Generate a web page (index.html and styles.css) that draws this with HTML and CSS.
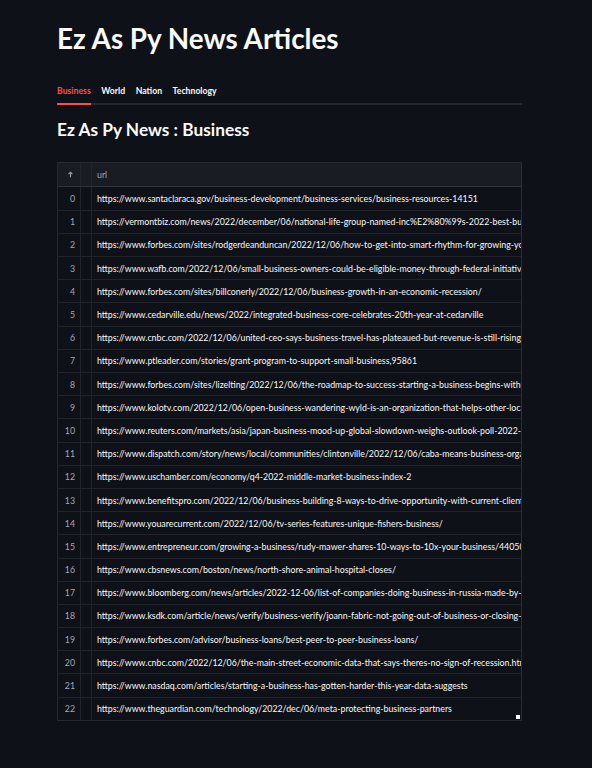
FILE: index.html
```html
<!DOCTYPE html>
<html>
<head>
<meta charset="utf-8">
<link rel="stylesheet" href="styles.css">
</head>
<body>
<main class="main">
  <h1 class="title">Ez As Py News Articles</h1>
  <div class="tabs">
    <span class="tab active">Business</span>
    <span class="tab">World</span>
    <span class="tab">Nation</span>
    <span class="tab">Technology</span>
  </div>
  <h2 class="subtitle">Ez As Py News : Business</h2>
  <div class="grid">
    <div class="row head">
      <div class="c-idx"><svg width="7" height="7" viewBox="0 0 8 8"><path d="M4 7V1.5M1.8 3.6L4 1.4 6.2 3.6" stroke="#9a9ca3" stroke-width="1.3" fill="none"/></svg></div>
      <div class="c-gap"></div>
      <div class="c-url">url</div>
    </div>
    <div class="row"><div class="c-idx">0</div><div class="c-gap"></div><div class="c-url">https://www.santaclaraca.gov/business-development/business-services/business-resources-14151</div></div>
    <div class="row"><div class="c-idx">1</div><div class="c-gap"></div><div class="c-url">https://vermontbiz.com/news/2022/december/06/national-life-group-named-inc%E2%80%99s-2022-best-business-to-work-for</div></div>
    <div class="row"><div class="c-idx">2</div><div class="c-gap"></div><div class="c-url">https://www.forbes.com/sites/rodgerdeanduncan/2022/12/06/how-to-get-into-smart-rhythm-for-growing-your-business/</div></div>
    <div class="row"><div class="c-idx">3</div><div class="c-gap"></div><div class="c-url">https://www.wafb.com/2022/12/06/small-business-owners-could-be-eligible-money-through-federal-initiative/</div></div>
    <div class="row"><div class="c-idx">4</div><div class="c-gap"></div><div class="c-url">https://www.forbes.com/sites/billconerly/2022/12/06/business-growth-in-an-economic-recession/</div></div>
    <div class="row"><div class="c-idx">5</div><div class="c-gap"></div><div class="c-url">https://www.cedarville.edu/news/2022/integrated-business-core-celebrates-20th-year-at-cedarville</div></div>
    <div class="row"><div class="c-idx">6</div><div class="c-gap"></div><div class="c-url">https://www.cnbc.com/2022/12/06/united-ceo-says-business-travel-has-plateaued-but-revenue-is-still-rising.html</div></div>
    <div class="row"><div class="c-idx">7</div><div class="c-gap"></div><div class="c-url">https://www.ptleader.com/stories/grant-program-to-support-small-business,95861</div></div>
    <div class="row"><div class="c-idx">8</div><div class="c-gap"></div><div class="c-url">https://www.forbes.com/sites/lizelting/2022/12/06/the-roadmap-to-success-starting-a-business-begins-with-a-plan/</div></div>
    <div class="row"><div class="c-idx">9</div><div class="c-gap"></div><div class="c-url">https://www.kolotv.com/2022/12/06/open-business-wandering-wyld-is-an-organization-that-helps-other-local-businesses/</div></div>
    <div class="row"><div class="c-idx">10</div><div class="c-gap"></div><div class="c-url">https://www.reuters.com/markets/asia/japan-business-mood-up-global-slowdown-weighs-outlook-poll-2022-12-06/</div></div>
    <div class="row"><div class="c-idx">11</div><div class="c-gap"></div><div class="c-url">https://www.dispatch.com/story/news/local/communities/clintonville/2022/12/06/caba-means-business-organization/</div></div>
    <div class="row"><div class="c-idx">12</div><div class="c-gap"></div><div class="c-url">https://www.uschamber.com/economy/q4-2022-middle-market-business-index-2</div></div>
    <div class="row"><div class="c-idx">13</div><div class="c-gap"></div><div class="c-url">https://www.benefitspro.com/2022/12/06/business-building-8-ways-to-drive-opportunity-with-current-clients/</div></div>
    <div class="row"><div class="c-idx">14</div><div class="c-gap"></div><div class="c-url">https://www.youarecurrent.com/2022/12/06/tv-series-features-unique-fishers-business/</div></div>
    <div class="row"><div class="c-idx">15</div><div class="c-gap"></div><div class="c-url">https://www.entrepreneur.com/growing-a-business/rudy-mawer-shares-10-ways-to-10x-your-business/440503</div></div>
    <div class="row"><div class="c-idx">16</div><div class="c-gap"></div><div class="c-url">https://www.cbsnews.com/boston/news/north-shore-animal-hospital-closes/</div></div>
    <div class="row"><div class="c-idx">17</div><div class="c-gap"></div><div class="c-url">https://www.bloomberg.com/news/articles/2022-12-06/list-of-companies-doing-business-in-russia-made-by-yale</div></div>
    <div class="row"><div class="c-idx">18</div><div class="c-gap"></div><div class="c-url">https://www.ksdk.com/article/news/verify/business-verify/joann-fabric-not-going-out-of-business-or-closing-stores</div></div>
    <div class="row"><div class="c-idx">19</div><div class="c-gap"></div><div class="c-url">https://www.forbes.com/advisor/business-loans/best-peer-to-peer-business-loans/</div></div>
    <div class="row"><div class="c-idx">20</div><div class="c-gap"></div><div class="c-url">https://www.cnbc.com/2022/12/06/the-main-street-economic-data-that-says-theres-no-sign-of-recession.html</div></div>
    <div class="row"><div class="c-idx">21</div><div class="c-gap"></div><div class="c-url">https://www.nasdaq.com/articles/starting-a-business-has-gotten-harder-this-year-data-suggests</div></div>
    <div class="row"><div class="c-idx">22</div><div class="c-gap"></div><div class="c-url">https://www.theguardian.com/technology/2022/dec/06/meta-protecting-business-partners</div></div>
    <span class="resize"></span>
  </div>
</main>
</body>
</html>
```
FILE: styles.css
```css
html, body {
  margin: 0;
  padding: 0;
  background: #0e1117;
  color: #fafafa;
  font-family: Lato, "Noto Sans", sans-serif;
}
.main {
  width: 465px;
  padding: 21px 0 0 57px;
}
.title {
  margin: 0;
  font-size: 27.8px;
  font-weight: 700;
  line-height: 36px;
  letter-spacing: 0;
}
.tabs {
  margin-top: 28px;
  display: flex;
  gap: 10.5px;
  border-bottom: 2px solid #262730;
}
.tab {
  font-size: 8.7px;
  font-weight: 700;
  line-height: 11px;
  height: 18px;
  color: #fafafa;
  border-bottom: 2px solid transparent;
  margin-bottom: -2px;
}
.tab.active {
  color: #ff4b4b;
  border-bottom-color: #ff4b4b;
}
.subtitle {
  margin: 13px 0 0;
  font-size: 17.3px;
  font-weight: 700;
  line-height: 24px;
}
.grid {
  position: relative;
  margin-top: 20px;
  border: 1px solid #262730;
  border-right-color: #2c2e36;
  width: 463px;
}
.row {
  display: flex;
  height: 23.2px;
  border-top: 1px solid #22242c;
  box-sizing: border-box;
  font-size: 8.8px;
  align-items: center;
}
.row:first-child {
  border-top: none;
}
.row.head {
  height: 23.5px;
  background: #1a1c23;
  color: #a3a8b4;
  border-bottom: 1px solid #32343c;
}
.row.head + .row { border-top: none; }
.c-idx {
  width: 23px;
  height: 100%;
  box-sizing: border-box;
  border-right: 1px solid #22242c;
  display: flex;
  align-items: center;
  justify-content: flex-end;
  padding-right: 5px;
  color: #a3a8b4;
}
.head .c-idx {
  justify-content: center;
  padding: 0 0 0 2px;
}
.c-gap {
  width: 11px;
  height: 100%;
  border-right: 1px solid #22242c;
  box-sizing: border-box;
}
.c-url {
  flex: 1;
  padding-left: 5px;
  white-space: nowrap;
  overflow: hidden;
  color: #fafafa;
}
.head .c-url { color: #a3a8b4; }
.resize {
  position: absolute;
  right: 1px;
  bottom: 1px;
  width: 4px;
  height: 4px;
  background: #ffffff;
}
```
